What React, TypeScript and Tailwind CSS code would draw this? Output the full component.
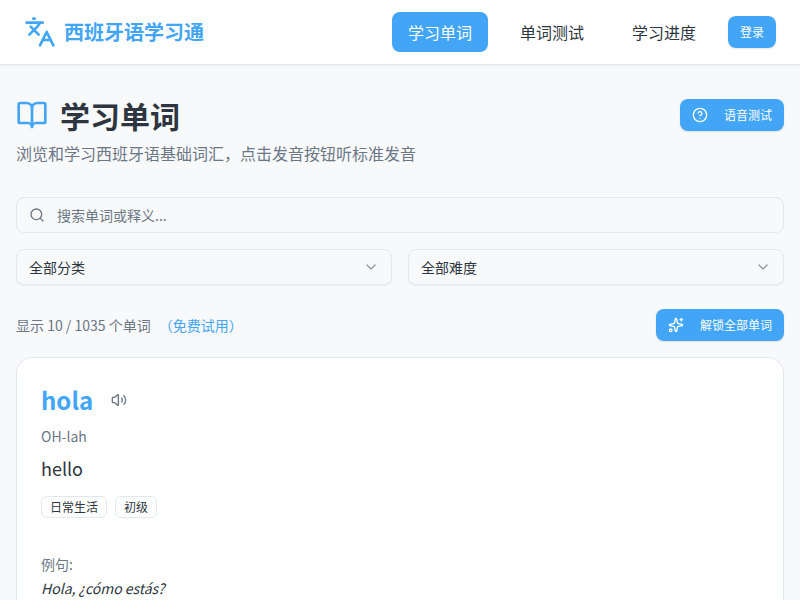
import React from 'react';
import { BookOpen, ChevronDown, CircleHelp, Languages, Search, Sparkles, Volume2 } from 'lucide-react';

const navItems = ['学习单词', '单词测试', '学习进度'];

const FilterSelect: React.FC<{ label: string }> = ({ label }) => (
  <div className="flex-1 h-9 flex items-center justify-between pl-3 pr-3 border border-[#e2e8f0] rounded-lg bg-[#f8f9fb] shadow-[0_1px_2px_rgba(0,0,0,0.05)]">
    <span className="text-sm text-[#2d3540]">{label}</span>
    <ChevronDown size={16} className="text-[#8f98a5]" />
  </div>
);

export default function App() {
  return (
    <div className="w-[800px] h-[600px] overflow-hidden bg-[#f8f9fb] font-['Noto_Sans_CJK_SC','Noto_Sans',sans-serif]">
      <header className="h-[65px] bg-white border-b border-[#e2e8f0] shadow-[0_1px_3px_rgba(0,0,0,0.05)] flex items-center justify-between px-6">
        <div className="flex items-center gap-2">
          <Languages size={32} className="text-[#42a5f5]" />
          <span className="text-xl font-bold text-[#42a5f5]">西班牙语学习通</span>
        </div>
        <nav className="flex items-center gap-4">
          {navItems.map((item, i) => (
            <div
              key={item}
              className={`h-10 px-4 flex items-center rounded-lg text-base ${i === 0 ? 'bg-[#42a5f5] text-white' : 'text-[#2d3540]'}`}
            >
              {item}
            </div>
          ))}
          <div className="h-8 px-3 flex items-center rounded-lg bg-[#42a5f5] text-white text-xs shadow-[0_1px_2px_rgba(0,0,0,0.1)]">登录</div>
        </nav>
      </header>

      <main className="px-4 pt-8">
        <div className="flex items-start justify-between">
          <div>
            <div className="flex items-center gap-3">
              <BookOpen size={32} className="text-[#42a5f5]" />
              <h1 className="text-3xl font-bold text-[#2d3540]">学习单词</h1>
            </div>
            <p className="text-base text-[#6b7785] mt-2">浏览和学习西班牙语基础词汇，点击发音按钮听标准发音</p>
          </div>
          <div className="mt-0.5 h-8 px-3 flex items-center gap-4 rounded-lg bg-[#42a5f5] text-white text-xs shadow-[0_1px_2px_rgba(0,0,0,0.1)]">
            <CircleHelp size={16} />
            语音测试
          </div>
        </div>

        <div className="mt-8 h-9 flex items-center gap-3 px-3 border border-[#e2e8f0] rounded-lg bg-[#f8f9fb]">
          <Search size={16} className="text-[#6b7785]" />
          <span className="text-sm text-[#6b7785]">搜索单词或释义...</span>
        </div>

        <div className="mt-4 flex gap-4">
          <FilterSelect label="全部分类" />
          <FilterSelect label="全部难度" />
        </div>

        <div className="mt-6 flex items-center justify-between">
          <div className="text-sm text-[#6b7785]">
            显示 10 / 1035 个单词
            <span className="ml-2 text-[#42a5f5]">（免费试用）</span>
          </div>
          <div className="h-8 px-3 flex items-center gap-4 rounded-lg bg-[#42a5f5] text-white text-xs shadow-[0_1px_2px_rgba(0,0,0,0.1)]">
            <Sparkles size={16} />
            解锁全部单词
          </div>
        </div>

        <section className="mt-4 bg-white border border-[#e2e8f0] rounded-2xl p-6 pb-10 shadow-[0_1px_2px_rgba(0,0,0,0.05)]">
          <div className="flex items-center gap-[18px] h-9">
            <h2 className="text-2xl font-bold text-[#42a5f5]">hola</h2>
            <Volume2 size={16} className="text-[#6b7785]" />
          </div>
          <p className="mt-2 text-sm text-[#6b7785]">OH-lah</p>
          <p className="mt-2 text-lg text-[#2d3540]">hello</p>
          <div className="mt-[14px] flex gap-2">
            <span className="h-[22px] px-2 flex items-center border border-[#e2e8f0] rounded-md text-xs text-[#2d3540]">日常生活</span>
            <span className="h-[22px] px-2 flex items-center border border-[#e2e8f0] rounded-md text-xs text-[#2d3540]">初级</span>
          </div>
          <p className="mt-[34px] text-sm leading-6 text-[#6b7785]">例句:</p>
          <p className="text-sm leading-6 italic text-[#2d3540]">Hola, ¿cómo estás?</p>
        </section>
      </main>
    </div>
  );
}
